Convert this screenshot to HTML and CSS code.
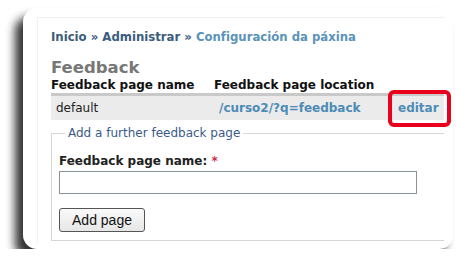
FILE: index.html
```html
<!DOCTYPE html>
<html lang="gl">
<head>
    <meta charset="UTF-8">
    <title>Feedback</title>
    <link rel="stylesheet" href="styles.css">
</head>
<body>
    <div class="card">
        <div class="page">
            <div class="crumbs">
                <a href="#" class="crumb">Inicio</a> &raquo;
                <a href="#" class="crumb">Administrar</a> &raquo;
                <a href="#" class="crumb current">Configuración da páxina</a>
            </div>

            <h2 class="title">Feedback</h2>

            <table class="pages">
                <thead>
                    <tr>
                        <th class="col-name">Feedback page name</th>
                        <th class="col-loc">Feedback page location</th>
                        <th class="col-edit"></th>
                    </tr>
                </thead>
                <tbody>
                    <tr>
                        <td>default</td>
                        <td><a href="#" class="link">/curso2/?q=feedback</a></td>
                        <td class="edit-cell"><a href="#" class="link">editar</a><span class="highlight"></span></td>
                    </tr>
                </tbody>
            </table>

            <fieldset class="add-form">
                <legend>Add a further feedback page</legend>
                <label for="page-name">Feedback page name: <span class="req">*</span></label>
                <input type="text" id="page-name" class="text-field">
                <button class="btn">Add page</button>
            </fieldset>
        </div>
    </div>
</body>
</html>
```

FILE: styles.css
```css
body {
    margin: 0;
    background-color: #fff;
    font-family: "DejaVu Sans", Verdana, sans-serif;
}

.card {
    margin: 8px 0 0 23px;
    width: 430px;
    height: 241px;
    box-sizing: border-box;
    padding: 9px 8px 0 14px;
    background-color: #fff;
    border-radius: 14px;
    box-shadow: -8px 9px 10px rgba(0, 0, 0, 0.8);
}

.page {
    height: 226px;
    box-sizing: border-box;
    padding: 11px 0 0 13px;
    border-top: 1px solid #f1f1f1;
    border-left: 1px solid #f1f1f1;
}

.crumbs {
    font-size: 11.7px;
    font-weight: bold;
    color: #3b5c7c;
    line-height: 16px;
}

.crumb {
    color: #3b5c7c;
    text-decoration: none;
}

.crumb.current {
    color: #5a93b8;
}

.title {
    margin: 13px 0 0;
    font-size: 16.5px;
    line-height: 20px;
    color: #777;
}

.pages {
    width: 393px;
    border-collapse: collapse;
    table-layout: fixed;
    font-size: 12px;
}

.pages th {
    text-align: left;
    padding: 0;
    line-height: 15px;
    color: #111;
    white-space: nowrap;
}

.col-name {
    width: 163px;
}

.col-loc {
    width: 179px;
}

.pages td {
    background-color: #ebebeb;
    border-top: 3px solid #c9c9c9;
    height: 24px;
    padding: 0 0 0 5px;
    color: #222;
}

.link {
    color: #4b8bb5;
    font-weight: bold;
    text-decoration: none;
}

.edit-cell {
    position: relative;
}

.highlight {
    position: absolute;
    left: -5px;
    top: -6px;
    width: 55px;
    height: 29px;
    border: 4px solid #e8001c;
    border-radius: 6px;
}

.add-form {
    margin: 6px 0 0;
    width: 393px;
    height: 115px;
    box-sizing: border-box;
    padding: 12px 0 0 7px;
    border: 1px solid #d6d6d6;
    border-right: none;
}

.add-form legend {
    margin-left: 6px;
    padding: 0 3px;
    font-size: 12px;
    line-height: 15px;
    color: #3a5a8c;
}

.add-form label {
    display: block;
    font-size: 12px;
    font-weight: bold;
    color: #222;
    line-height: 16px;
}

.req {
    color: #c0304a;
}

.text-field {
    display: block;
    margin-top: 2px;
    width: 358px;
    height: 23px;
    box-sizing: border-box;
    border: 1px solid #8a9498;
}

.btn {
    display: block;
    margin-top: 14px;
    width: 86px;
    height: 24px;
    font-family: "Liberation Sans", Arial, sans-serif;
    font-size: 14px;
    color: #111;
    background: linear-gradient(#fafafa, #e6e6e6);
    border: 1px solid #555;
    border-radius: 3px;
}
```
